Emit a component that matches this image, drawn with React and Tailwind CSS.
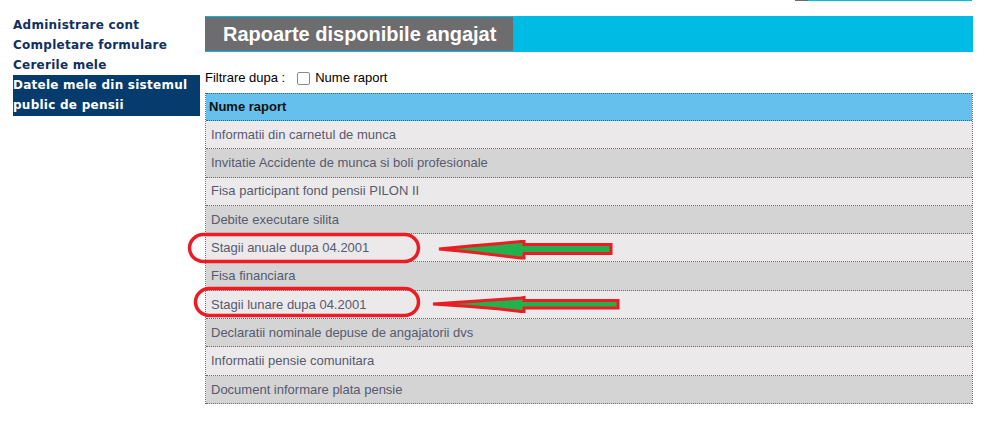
const reports = [
  'Informatii din carnetul de munca',
  'Invitatie Accidente de munca si boli profesionale',
  'Fisa participant fond pensii PILON II',
  'Debite executare silita',
  'Stagii anuale dupa 04.2001',
  'Fisa financiara',
  'Stagii lunare dupa 04.2001',
  'Declaratii nominale depuse de angajatorii dvs',
  'Informatii pensie comunitara',
  'Document informare plata pensie',
];

const menu = ['Administrare cont', 'Completare formulare', 'Cererile mele'];

const App = () => {
  return (
    <div className="relative w-[991px] h-[424px] bg-white overflow-hidden font-['Liberation_Sans',Arial,sans-serif]">
      <div className="flex">
        {/* Sidebar */}
        <div className="w-[200px] pl-[13px] pt-[15px] font-['DejaVu_Sans',Verdana,sans-serif] font-bold text-[12px] tracking-[0.25px] leading-[20px]">
          {menu.map((item) => (
            <div key={item} className="text-[#10305f]">{item}</div>
          ))}
          <div className="bg-[#063b6e] text-white pb-[1px]">
            Datele mele din sistemul
            <br />
            public de pensii
          </div>
        </div>

        {/* Main */}
        <div className="ml-[5px] w-[768px]">
          <div className="flex h-[1px] ml-auto w-[177px] mr-[1px]">
            <div className="w-[13px] bg-[#6d6c6e]" />
            <div className="flex-1 bg-[#00bbe3]" />
          </div>
          <div className="mt-[15px] h-[36px] bg-[#00bbe3] flex items-center">
            <div className="h-[34px] w-[308px] bg-[#6d6c6e] flex items-center pl-[18px] text-white font-bold text-[20px]">
              Rapoarte disponibile angajat
            </div>
          </div>

          <div className="mt-[18px] h-[16px] flex items-center text-[13px] text-black">
            <span>Filtrare dupa :</span>
            <span className="ml-[12px] w-[13px] h-[13px] rounded-[2px] border border-[#8a8a92] bg-white" />
            <span className="ml-[5px]">Nume raport</span>
          </div>

          <div className="mt-[7px] border-l border-r border-dotted border-[#6f6f6f] text-[13px]">
            <div className="h-[28px] border-t border-b border-dotted border-[#3a5f80] bg-[#66c0ec] flex items-center pl-[3px] font-bold text-[#111]">
              Nume raport
            </div>
            {reports.map((r, i) => (
              <div
                key={r}
                className={`h-[28.3px] border-b border-dotted border-[#6f6f6f] flex items-center pl-[5px] text-[#575a70] ${
                  i % 2 === 0 ? 'bg-[#ebe9ea]' : 'bg-[#d4d4d4]'
                }`}
              >
                {r}
              </div>
            ))}
          </div>
        </div>
      </div>

      {/* Annotations */}
      <svg className="absolute inset-0 pointer-events-none" width="991" height="424" viewBox="0 0 991 424">
        <rect x="189.5" y="234.5" width="229" height="27" rx="14" fill="none" stroke="#ed1c24" strokeWidth="3.5" />
        <rect x="195.5" y="288.5" width="223" height="27" rx="14" fill="none" stroke="#ed1c24" strokeWidth="3.5" />
        <polygon
          points="439,249 470,246 500,243.5 521,241.5 524,241.5 524,244.5 611,244.5 611,253.5 524,253.5 524,258 521,258 500,255.5 470,252"
          fill="#22b14c"
          stroke="#ed1c24"
          strokeWidth="3"
          strokeLinejoin="miter"
        />
        <polygon
          points="433,304 470,301.5 500,299.5 521,298 524,297.5 524,300.5 618,300.5 618,308 524,308 524,311.5 521,311.5 500,309 470,306.5"
          fill="#22b14c"
          stroke="#ed1c24"
          strokeWidth="3"
          strokeLinejoin="miter"
        />
      </svg>
    </div>
  );
};

export default App;
